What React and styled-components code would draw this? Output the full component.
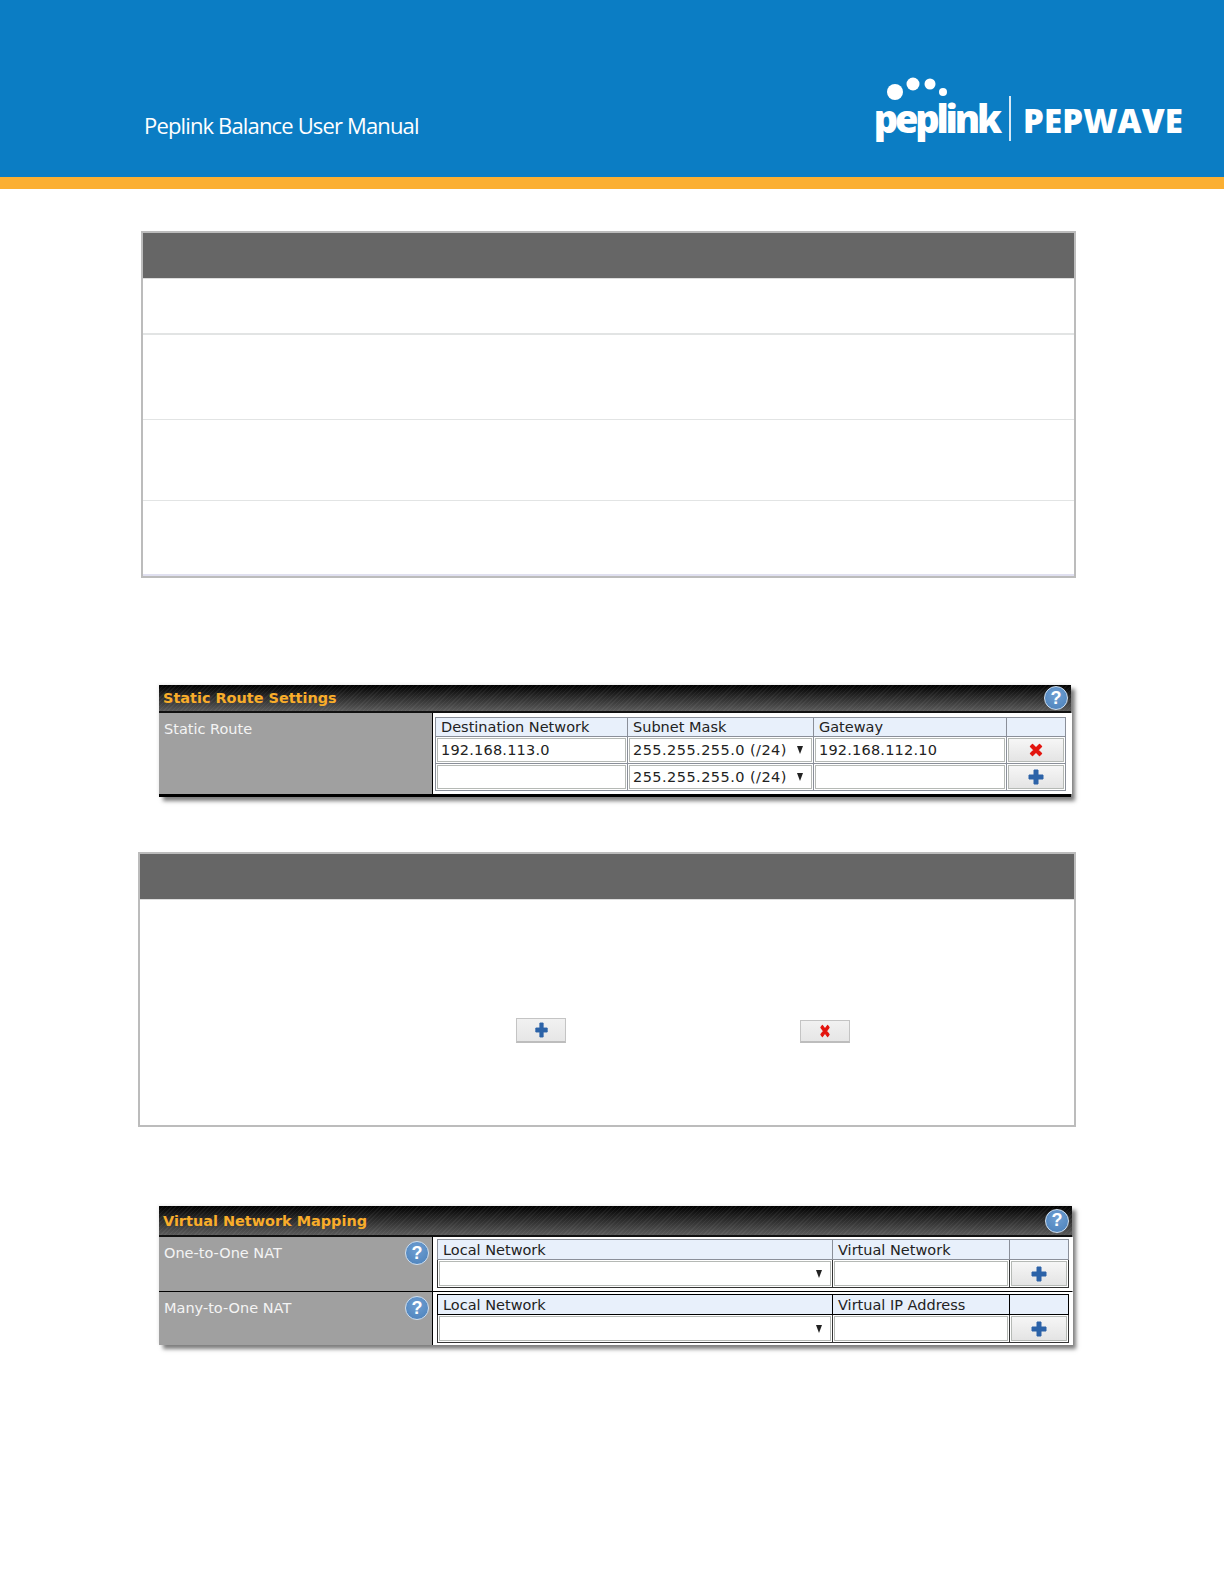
import React, { Fragment } from 'react';
import styled, { createGlobalStyle } from 'styled-components';

const GlobalStyle = createGlobalStyle`
  html, body {
    margin: 0;
    background: #fff;
  }
`;

const Page = styled.div`
  width: 1224px;
  height: 1584px;
  overflow: hidden;
  background: #fff;
  font-family: "DejaVu Sans", Verdana, sans-serif;
`;

const Banner = styled.header`
  box-sizing: border-box;
  height: 189px;
  padding: 0 41px 0 144px;
  background: #0b7dc4;
  display: flex;
  justify-content: space-between;
  align-items: flex-end;
  border-bottom: 12px solid #fbaf32;
`;

const ManualTitle = styled.div`
  font-family: "Open Sans", sans-serif;
  font-size: 22px;
  letter-spacing: -0.85px;
  line-height: 30px;
  color: #fff;
  margin-bottom: 37px;
`;

const Logo = styled.div`
  position: relative;
  display: flex;
  align-items: flex-end;
  margin-bottom: 36px;
`;

const LogoDots = styled.svg`
  position: absolute;
  left: 13px;
  top: -18px;
`;

const Peplink = styled.div`
  font-family: "Open Sans", sans-serif;
  font-weight: 800;
  font-size: 38px;
  letter-spacing: -3.2px;
  line-height: 46px;
  color: #fff;
`;

const LogoRule = styled.div`
  width: 2px;
  height: 45px;
  margin: 0 12px 0 10px;
  background: #d6e9f6;
`;

const Pepwave = styled.div`
  font-family: "Open Sans", sans-serif;
  font-weight: 800;
  font-size: 33px;
  letter-spacing: 0.15px;
  line-height: 46px;
  color: #fff;
  margin-bottom: -3px;
`;

const DocTable = styled.section`
  box-sizing: border-box;
  width: ${(p) => p.$width}px;
  margin-top: ${(p) => p.$top}px;
  margin-left: ${(p) => p.$left}px;
  border: 2px solid #bcbcbc;
`;

const DocHead = styled.div`
  height: 45px;
  background: #666;
  border-bottom: 1px solid #ddd;
`;

const DocRow = styled.div`
  box-sizing: border-box;
  height: ${(p) => p.$height}px;
  border-bottom: ${(p) => p.$line || '1px solid #e2e4e4'};
`;

const DocBody = styled.div`
  box-sizing: border-box;
  height: 225px;
  padding: 118px 0 0 376px;
  display: flex;
  align-items: flex-start;
  gap: 234px;
`;

const SampleButton = styled.div`
  box-sizing: border-box;
  width: 50px;
  height: ${(p) => p.$height}px;
  margin-top: ${(p) => p.$top}px;
  display: flex;
  align-items: center;
  justify-content: center;
  background: linear-gradient(#f1f1f1, #e6e6e6);
  border: 1px solid #c4c4c4;
  border-bottom: 2px solid #bdbdbd;
`;

const Panel = styled.section`
  box-sizing: border-box;
  width: ${(p) => p.$width}px;
  margin-top: ${(p) => p.$top}px;
  margin-left: 159px;
  background: #a0a0a0;
  border-bottom: ${(p) => p.$bottom}px solid #000;
  box-shadow: 4px 4px 4px #7d7d7d, -1px -1px 3px #eee;
`;

const TitleBar = styled.div`
  box-sizing: border-box;
  height: ${(p) => p.$height}px;
  padding: 0 3px 0 4px;
  display: flex;
  align-items: center;
  justify-content: space-between;
  border-bottom: 2px solid #111;
  background:
    repeating-linear-gradient(135deg, rgba(255, 255, 255, 0.05) 0 1px, transparent 1px 3px),
    linear-gradient(#000, #1c1c1c 30%, #5a5a5a);
`;

const PanelTitle = styled.div`
  font-size: 14.45px;
  font-weight: 700;
  color: #f9ad2a;
  line-height: 20px;
`;

const HelpIcon = styled.div`
  box-sizing: border-box;
  flex: none;
  width: 24px;
  height: 24px;
  border-radius: 50%;
  display: flex;
  align-items: center;
  justify-content: center;
  background: radial-gradient(circle at 50% 35%, #6f9fd2, #4a80ba);
  border: 1.5px solid #cfdff0;
  font-family: "Liberation Sans", Arial, sans-serif;
  font-size: 18px;
  font-weight: 700;
  color: #fff;
`;

const LabelHelp = styled(HelpIcon)`
  margin-top: -2px;
`;

const SettingRow = styled.div`
  display: grid;
  grid-template-columns: 273px 1fr;
  height: ${(p) => p.$height}px;
  border-top: ${(p) => (p.$divided ? '1px solid #000' : 'none')};
`;

const SettingLabel = styled.div`
  box-sizing: border-box;
  padding: 6px 3px 0 5px;
  display: flex;
  justify-content: space-between;
  align-items: flex-start;
  font-size: 14.5px;
  line-height: 20px;
  color: #f4f4f4;
`;

const SettingValue = styled.div`
  box-sizing: border-box;
  background: #fff;
  border-left: 1px solid #000;
  padding: ${(p) => p.$pad};
`;

const Grid = styled.table`
  border-collapse: collapse;
  table-layout: fixed;
  width: 100%;
  font-size: 14.5px;
`;

const HeadCell = styled.th`
  box-sizing: border-box;
  height: ${(p) => p.$height}px;
  padding: 0 0 0 5px;
  border: 1px solid ${(p) => p.$line};
  background: #e8f0fb;
  font-weight: 400;
  text-align: left;
  color: #222;
`;

const BodyCell = styled.td`
  box-sizing: border-box;
  height: ${(p) => p.$height}px;
  padding: 1px;
  border: 1px solid ${(p) => p.$line};
`;

const Field = styled.div`
  box-sizing: border-box;
  height: 100%;
  padding: 0 3px;
  display: flex;
  align-items: center;
  justify-content: space-between;
  background: #fff;
  border: 1px solid #b5b9b5;
  font-size: 14.5px;
  letter-spacing: ${(p) => p.$spacing || 0.2}px;
  color: #222;
  white-space: nowrap;
`;

const DropArrow = styled.span`
  width: 0;
  height: 0;
  margin-right: 5px;
  border-left: 3.5px solid transparent;
  border-right: 3.5px solid transparent;
  border-top: 8px solid #222;
`;

const RowButton = styled.div`
  box-sizing: border-box;
  height: 100%;
  display: flex;
  align-items: center;
  justify-content: center;
  background: linear-gradient(#f6f6f6, #e4e4e4);
  border: 1px solid #b5b9b5;
`;

const Plus = ({ size = 16, width }) => (
  <svg width={width || size} height={size} viewBox="0 0 16 16" preserveAspectRatio="none">
    <path d="M6 1h4v5h5v4h-5v5H6v-5H1V6h5z" fill="#2c63a8" stroke="#2c63a8" strokeLinejoin="round" />
  </svg>
);

const Cross = ({ size = 16, width }) => (
  <svg width={width || size} height={size} viewBox="0 0 16 16" preserveAspectRatio="none">
    <path d="M2.5 4.5l2-2L8 6l3.5-3.5 2 2L10 8l3.5 3.5-2 2L8 10l-3.5 3.5-2-2L6 8z" fill="#e3150f" stroke="#e3150f" strokeWidth="1.4" strokeLinejoin="round" />
  </svg>
);

const routeColumns = [192, 186, 193, 59];
const natColumns = [395, 177, 59];
const routes = [
  { network: '192.168.113.0', gateway: '192.168.112.10', icon: <Cross /> },
  { network: '', gateway: '', icon: <Plus /> },
];
const natRows = [
  { label: 'One-to-One NAT', virtual: 'Virtual Network', line: '#8a8f99' },
  { label: 'Many-to-One NAT', virtual: 'Virtual IP Address', line: '#000' },
];

const Columns = ({ widths }) => (
  <colgroup>
    {widths.map((w, i) => (
      <col key={i} width={w} />
    ))}
  </colgroup>
);

const App = () => {
  return (
    <Fragment>
      <GlobalStyle />
      <Page>
        <Banner>
          <ManualTitle>Peplink Balance User Manual</ManualTitle>
          <Logo>
            <LogoDots width="62" height="26" viewBox="0 0 62 26">
              <circle cx="8" cy="15" r="8" fill="#fff" />
              <circle cx="26" cy="7" r="6.5" fill="#fff" />
              <circle cx="43" cy="7" r="5.5" fill="#fff" />
              <circle cx="56" cy="15" r="4" fill="#fff" />
            </LogoDots>
            <Peplink>peplink</Peplink>
            <LogoRule />
            <Pepwave>PEPWAVE</Pepwave>
          </Logo>
        </Banner>

        <DocTable $width={935} $top={42} $left={141}>
          <DocHead />
          <DocRow $height={56} $line="2px solid #e2e4e4" />
          <DocRow $height={85} />
          <DocRow $height={81} />
          <DocRow $height={75} $line="2px solid #e0e0f0" />
        </DocTable>

        <Panel $width={912} $top={107} $bottom={3}>
          <TitleBar $height={28}>
            <PanelTitle>Static Route Settings</PanelTitle>
            <HelpIcon>?</HelpIcon>
          </TitleBar>
          <SettingRow $height={81}>
            <SettingLabel>Static Route</SettingLabel>
            <SettingValue $pad="4px 6px 0 2px">
              <Grid>
                <Columns widths={routeColumns} />
                <thead>
                  <tr>
                    <HeadCell $height={19} $line="#8a8f99">Destination Network</HeadCell>
                    <HeadCell $height={19} $line="#8a8f99">Subnet Mask</HeadCell>
                    <HeadCell $height={19} $line="#8a8f99">Gateway</HeadCell>
                    <HeadCell $height={19} $line="#8a8f99" />
                  </tr>
                </thead>
                <tbody>
                  {routes.map((r, i) => (
                    <tr key={i}>
                      <BodyCell $height={27} $line="#8a8f99"><Field>{r.network}</Field></BodyCell>
                      <BodyCell $height={27} $line="#8a8f99">
                        <Field $spacing={0.45}>255.255.255.0 (/24)<DropArrow /></Field>
                      </BodyCell>
                      <BodyCell $height={27} $line="#8a8f99"><Field>{r.gateway}</Field></BodyCell>
                      <BodyCell $height={27} $line="#8a8f99"><RowButton>{r.icon}</RowButton></BodyCell>
                    </tr>
                  ))}
                </tbody>
              </Grid>
            </SettingValue>
          </SettingRow>
        </Panel>

        <DocTable $width={938} $top={55} $left={138}>
          <DocHead />
          <DocBody>
            <SampleButton $height={25} $top={0}><Plus size={16} width={13} /></SampleButton>
            <SampleButton $height={23} $top={2}><Cross size={16} width={12} /></SampleButton>
          </DocBody>
        </DocTable>

        <Panel $width={913} $top={79} $bottom={0}>
          <TitleBar $height={31}>
            <PanelTitle>Virtual Network Mapping</PanelTitle>
            <HelpIcon>?</HelpIcon>
          </TitleBar>
          {natRows.map((row, i) => (
            <SettingRow key={row.label} $height={i === 0 ? 54 : 53} $divided={i > 0}>
              <SettingLabel>
                {row.label}
                <LabelHelp>?</LabelHelp>
              </SettingLabel>
              <SettingValue $pad="2px 4px 0 4px">
                <Grid>
                  <Columns widths={natColumns} />
                  <thead>
                    <tr>
                      <HeadCell $height={20} $line={row.line}>Local Network</HeadCell>
                      <HeadCell $height={20} $line={row.line}>{row.virtual}</HeadCell>
                      <HeadCell $height={20} $line={row.line} />
                    </tr>
                  </thead>
                  <tbody>
                    <tr>
                      <BodyCell $height={28} $line="#333"><Field><span /><DropArrow /></Field></BodyCell>
                      <BodyCell $height={28} $line="#333"><Field /></BodyCell>
                      <BodyCell $height={28} $line="#333"><RowButton><Plus /></RowButton></BodyCell>
                    </tr>
                  </tbody>
                </Grid>
              </SettingValue>
            </SettingRow>
          ))}
        </Panel>
      </Page>
    </Fragment>
  );
};

export default App;
